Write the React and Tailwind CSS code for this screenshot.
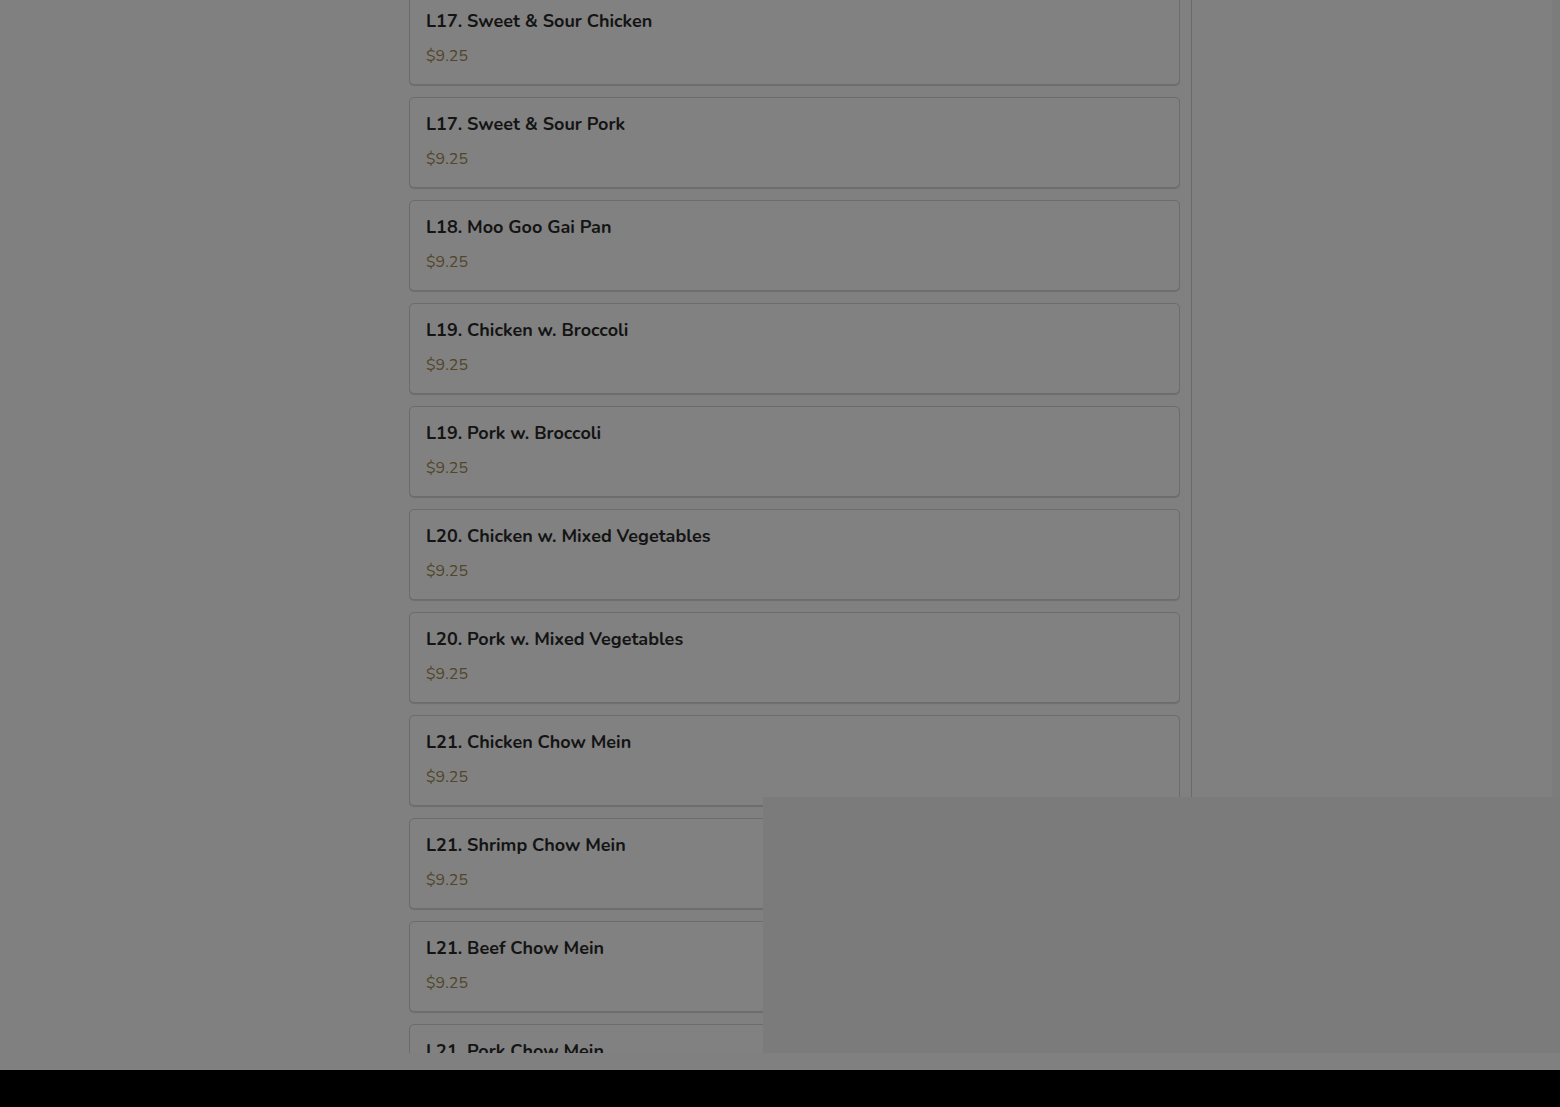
import React from 'react';

const items = [
    'L17. Sweet & Sour Chicken',
    'L17. Sweet & Sour Pork',
    'L18. Moo Goo Gai Pan',
    'L19. Chicken w. Broccoli',
    'L19. Pork w. Broccoli',
    'L20. Chicken w. Mixed Vegetables',
    'L20. Pork w. Mixed Vegetables',
    'L21. Chicken Chow Mein',
    'L21. Shrimp Chow Mein',
    'L21. Beef Chow Mein',
    'L21. Pork Chow Mein',
];

const MenuCard = ({ name, price }) => (
    <div className="rounded-[5px] border border-[#6c6c6c] bg-[#818181] px-4 pt-[15px] pb-[18px] shadow-[0_1px_1px_rgba(0,0,0,0.15)]">
        <h3 className="text-[18px] leading-[22px] font-bold text-[#141414]">{name}</h3>
        <p className="mt-[14px] text-[16px] leading-5 text-[#52452a]">{price}</p>
    </div>
);

const App = () => {
    return (
        <div className="w-[1560px] h-[1107px] bg-black overflow-hidden" style={{ fontFamily: '"Nunito", "Lato", "Open Sans", sans-serif' }}>
            <div className="relative h-[1070px] bg-[#808080] overflow-hidden">
                <div className="flex">
                    <div className="w-[409px] shrink-0" />

                    {/* menu list, clipped by the scroll area */}
                    <div className="w-[771px] shrink-0 h-[1053px] overflow-hidden">
                        <div className="-mt-[6px] flex flex-col gap-[12px]">
                            {items.map((name) => (
                                <MenuCard key={name} name={name} price="$9.25" />
                            ))}
                        </div>
                    </div>

                    <div className="w-[11px] shrink-0" />
                    <div className="w-px h-[797px] bg-[#6a6a6a] shrink-0" />
                    <div className="flex-1 h-[797px]" />
                    <div className="w-2 h-[797px] bg-[#7c7c7c] shrink-0" />
                </div>

                {/* darker patch lying over the lower right of the list */}
                <div className="absolute left-[763px] top-[797px] w-[797px] h-[256px] bg-[#7b7b7b]" />
            </div>
        </div>
    );
};

export default App;
